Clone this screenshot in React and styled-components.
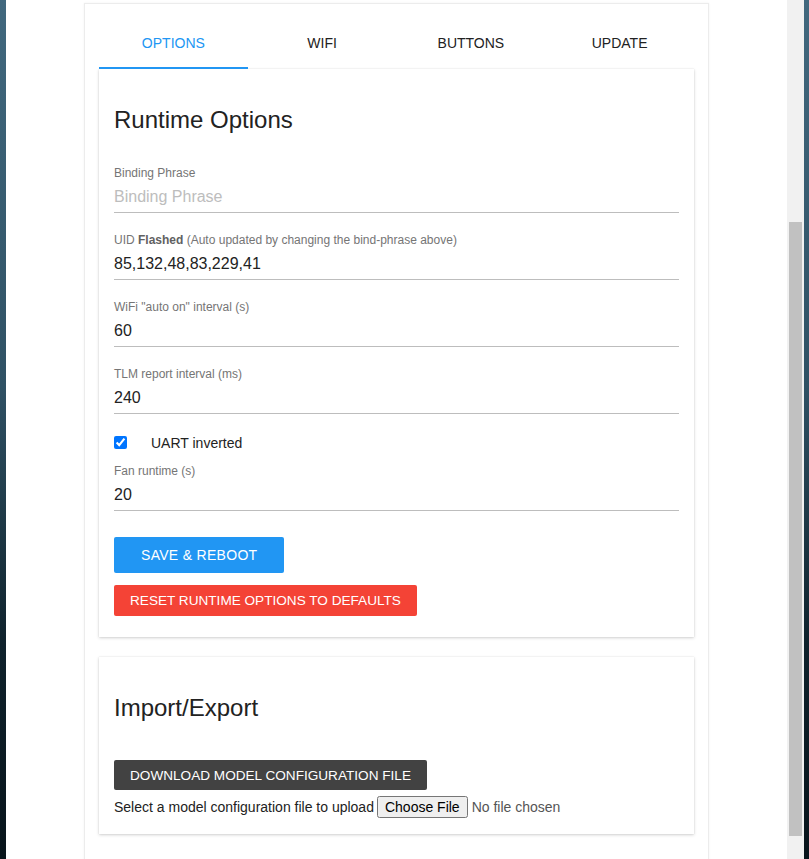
import React from "react";
import styled, { createGlobalStyle } from "styled-components";

const Global = createGlobalStyle`
  html, body { margin: 0; padding: 0; height: 100%; overflow: hidden; }
  body { font-family: "Liberation Sans", Arial, sans-serif; color: rgba(0,0,0,0.87); }
  * { box-sizing: border-box; }
`;

const Frame = styled.div`
  display: flex;
  height: 859px;
  width: 809px;
`;

const Edge = styled.div`
  width: ${(p) => p.$w}px;
  flex: none;
  background: linear-gradient(180deg, #41687e 0%, #2f5164 45%, #0f222c 75%, #08141b 100%);
`;

const Viewport = styled.div`
  flex: 1;
  background: #fff;
  overflow: hidden;
  display: flex;
  justify-content: center;
`;

const Scrollbar = styled.div`
  width: 17px;
  flex: none;
  background: #f1f1f1;
  padding: 222px 2px 0 2px;
`;

const Thumb = styled.div`
  height: 614px;
  background: #c1c1c1;
`;

const Card = styled.div`
  width: 625px;
  margin-top: 3px;
  background: #fff;
  border: 1px solid #ececec;
  box-shadow: 0 0 2px rgba(0, 0, 0, 0.06);
  padding: 15px 14px 0 14px;
  align-self: flex-start;
  min-height: 900px;
`;

const Tabs = styled.div`
  display: grid;
  grid-template-columns: repeat(4, 1fr);
`;

const Tab = styled.div`
  height: 50px;
  line-height: 48px;
  text-align: center;
  font-size: 14px;
  text-transform: uppercase;
  color: ${(p) => (p.$active ? "#2196f3" : "#222")};
  border-bottom: 2px solid ${(p) => (p.$active ? "#2196f3" : "transparent")};
`;

const Panel = styled.div`
  background: #fff;
  padding: 35px 15px ${(p) => p.$pb}px 15px;
  margin-bottom: 20px;
  box-shadow: 0 1px 3px rgba(0, 0, 0, 0.18), 0 0 1px rgba(0, 0, 0, 0.12);
`;

const Heading = styled.h2`
  margin: 0;
  font-size: 24px;
  font-weight: 400;
  line-height: 32px;
  color: #222;
`;

const Fields = styled.div`
  margin-top: 29px;
  display: flex;
  flex-direction: column;
`;

const Field = styled.div`
  display: flex;
  flex-direction: column;
  margin-bottom: 19px;
`;

const Label = styled.label`
  font-size: 12px;
  line-height: 16px;
  color: #757575;
  b { color: #616161; font-weight: 700; }
`;

const Input = styled.input`
  height: 32px;
  border: none;
  border-bottom: 1px solid #bdbdbd;
  font-family: inherit;
  font-size: 16px;
  color: #222;
  padding: 0;
  outline: none;
  background: transparent;
  &::placeholder { color: #bdbdbd; }
`;

const CheckRow = styled.label`
  display: flex;
  align-items: center;
  height: 20px;
  margin-bottom: 10px;
  font-size: 14px;
  color: #222;
  input { margin: 0 24px 2px 0; width: 13px; height: 13px; }
`;

const Button = styled.button`
  display: inline-block;
  align-self: flex-start;
  border: none;
  border-radius: 2px;
  height: ${(p) => p.$h}px;
  padding: 0 ${(p) => p.$px}px;
  margin-top: ${(p) => p.$mt}px;
  background: ${(p) => p.$bg};
  color: #fff;
  font-family: inherit;
  font-size: ${(p) => p.$fs || 14}px;
  letter-spacing: ${(p) => p.$ls || 0}px;
  text-transform: uppercase;
  cursor: pointer;
`;

const UploadRow = styled.div`
  display: flex;
  align-items: center;
  margin-top: 5px;
  height: 24px;
  font-size: 14px;
  color: #222;
  input {
    margin-left: 3px;
    font-family: "Liberation Sans", Arial, sans-serif;
    font-size: 14px;
    color: #555;
  }
`;

const Column = styled.div`
  display: flex;
  flex-direction: column;
`;

export default function App() {
  return (
    <>
      <Global />
      <Frame>
        <Edge $w={6} />
        <Viewport>
          <Card>
            <Tabs>
              <Tab $active>Options</Tab>
              <Tab>WiFi</Tab>
              <Tab>Buttons</Tab>
              <Tab>Update</Tab>
            </Tabs>
            <Panel $pb={21}>
              <Heading>Runtime Options</Heading>
              <Fields>
                <Field>
                  <Label>Binding Phrase</Label>
                  <Input placeholder="Binding Phrase" />
                </Field>
                <Field>
                  <Label>
                    UID <b>Flashed</b> (Auto updated by changing the bind-phrase above)
                  </Label>
                  <Input defaultValue="85,132,48,83,229,41" />
                </Field>
                <Field>
                  <Label>WiFi "auto on" interval (s)</Label>
                  <Input defaultValue="60" />
                </Field>
                <Field>
                  <Label>TLM report interval (ms)</Label>
                  <Input defaultValue="240" />
                </Field>
                <CheckRow>
                  <input type="checkbox" defaultChecked />
                  UART inverted
                </CheckRow>
                <Field>
                  <Label>Fan runtime (s)</Label>
                  <Input defaultValue="20" />
                </Field>
                <Column>
                  <Button $bg="#2196f3" $h={36} $px={27} $mt={7} $ls={0.3}>
                    Save &amp; Reboot
                  </Button>
                  <Button $bg="#f44336" $h={31} $px={16} $mt={12} $fs={13.6}>
                    Reset runtime options to defaults
                  </Button>
                </Column>
              </Fields>
            </Panel>
            <Panel $pb={15}>
              <Heading>Import/Export</Heading>
              <Column>
                <Button $bg="#424242" $h={30} $px={16} $mt={36} $fs={13.6}>
                  Download model configuration file
                </Button>
                <UploadRow>
                  Select a model configuration file to upload
                  <input type="file" />
                </UploadRow>
              </Column>
            </Panel>
          </Card>
        </Viewport>
        <Scrollbar>
          <Thumb />
        </Scrollbar>
        <Edge $w={5} />
      </Frame>
    </>
  );
}
